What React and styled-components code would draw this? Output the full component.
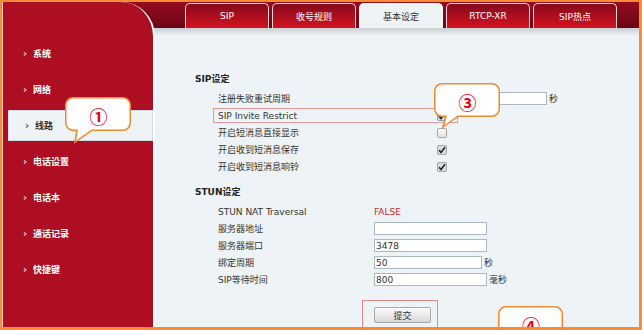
import React from "react";
import styled, { createGlobalStyle } from "styled-components";

const GlobalStyle = createGlobalStyle`
   body {
      margin: 0;
      font-family: "DejaVu Sans", "Noto Sans CJK SC", sans-serif;
   }
`;

const Frame = styled.div`
   position: relative;
   width: 642px;
   height: 330px;
   box-sizing: border-box;
   border: solid #f28c38;
   border-width: 2px 3px 3px 2px;
   overflow: hidden;
   display: flex;
   background: linear-gradient(#960b1f, #6c0514) 0 0 / 100% 26px no-repeat,
      linear-gradient(#c8ced2, #edf3f6) 0 26px / 100% 8px no-repeat, #edf3f6;
`;

const Sidebar = styled.div`
   width: 153px;
   flex-shrink: 0;
   box-sizing: border-box;
   background: #ad0e21;
   border-right: 2px solid #fff;
   border-left: 1px solid #f3c9c9;
   border-top-right-radius: 34px;
   padding: 36px 0 0 5px;
   display: flex;
   flex-direction: column;
   gap: 5px;
`;

const NavItem = styled.div`
   display: flex;
   align-items: center;
   height: 31px;
   box-sizing: border-box;
   padding-left: ${(p) => (p.$active ? 16 : 14)}px;
   font-size: 9px;
   font-weight: 700;
   color: ${(p) => (p.$active ? "#333" : "#fff")};
   background: ${(p) => (p.$active ? "#eef3f6" : "transparent")};
   border: 1px solid ${(p) => (p.$active ? "#d3dbe0" : "transparent")};
`;

const Arrow = styled.span`
   width: 10px;
   font-size: 10px;
   color: ${(p) => (p.$active ? "#555" : "#f4dcdc")};
`;

const Main = styled.div`
   flex: 1;
   display: flex;
   flex-direction: column;
`;

const TabBar = styled.div`
   height: 26px;
   padding: 1px 0 0 30px;
   box-sizing: border-box;
   display: flex;
   gap: 3px;
`;

const Tab = styled.div`
   width: 84px;
   height: 25px;
   box-sizing: border-box;
   border: 1px solid ${(p) => (p.$active ? "#f4f6f8" : "#f1d4d6")};
   border-bottom: none;
   border-radius: 5px 5px 0 0;
   background: ${(p) =>
      p.$active ? "#eef3f6" : "linear-gradient(#860a1c, #d3121f)"};
   color: ${(p) => (p.$active ? "#333" : "#fff")};
   font-size: 9px;
   display: flex;
   align-items: center;
   justify-content: center;
`;

const Shade = styled.div`
   height: 8px;
`;

const Content = styled.div`
   padding: 43px 0 0 40px;
   color: #333;
   font-size: 9px;
`;

const Section = styled.div`
   margin-top: ${(p) => p.$gap || 0}px;
`;

const Title = styled.div`
   height: 16px;
   line-height: 16px;
   font-weight: 700;
   color: #222;
   margin-bottom: 4px;
`;

const Rows = styled.div`
   display: flex;
   flex-direction: column;
   gap: 2px;
`;

const Row = styled.div`
   display: grid;
   grid-template-columns: ${(p) => p.$label}px auto;
   align-items: center;
   height: 15px;
   margin-left: 18px;
   padding-left: 5px;
   width: ${(p) => (p.$mark ? "245px" : "auto")};
   box-sizing: border-box;
   box-shadow: ${(p) => (p.$mark ? "inset 0 0 0 1px #e59a9a" : "none")};
`;

const Value = styled.div`
   display: flex;
   align-items: center;
`;

const Field = styled.input`
   width: ${(p) => p.$w}px;
   height: 13px;
   box-sizing: border-box;
   border: 1px solid #a9b8c4;
   background: #fff;
   padding: 0 1px;
   font: 9px "DejaVu Sans", sans-serif;
   color: #333;
   outline: none;
`;

const Unit = styled.span`
   margin-left: 2px;
`;

const Flag = styled.span`
   color: #d4232b;
`;

const Box = styled.span`
   width: 10px;
   height: 10px;
   box-sizing: border-box;
   border: 1px solid ${(p) => (p.$focus ? "#7f9cc8" : "#a6a6a6")};
   border-radius: 2px;
   background: ${(p) =>
      p.$focus ? "#c9d9f1" : p.$on ? "#dcdcdc" : "linear-gradient(#fafafa, #e4e4e4)"};
   display: flex;
   align-items: center;
   justify-content: center;
`;

const SubmitArea = styled.div`
   margin: 13px 0 0 167px;
   width: 76px;
   height: 30px;
   box-sizing: border-box;
   border: 1px solid #e08a8a;
   padding: 6px 0 0 11px;
`;

const Button = styled.button`
   width: 57px;
   height: 16px;
   padding: 0;
   border: 1px solid #a7a7a7;
   border-radius: 2px;
   background: linear-gradient(#fbfbfb, #d9d9d9);
   font: 9px "DejaVu Sans", "Noto Sans CJK SC", sans-serif;
   color: #333;
`;

const Bubble = styled.div`
   position: absolute;
   left: ${(p) => p.$x}px;
   top: ${(p) => p.$y}px;
   z-index: 5;
`;

const BubbleNum = styled.span`
   position: absolute;
   left: 0;
   top: 0;
   width: 100%;
   height: ${(p) => p.$h}px;
   padding-top: 3px;
   box-sizing: border-box;
   display: flex;
   align-items: center;
   justify-content: center;
   color: #e60012;
   font: 700 18px "Noto Sans CJK SC", sans-serif;
`;

function Callout({ x, y, w, h, tail, label }) {
   const [a, b, tx, ty] = tail;
   const r = 8;
   const s = 0.75;
   const q = r - s;
   const d = `M${r} ${s} H${w - r} A${q} ${q} 0 0 1 ${w - s} ${r} V${h - r} A${q} ${q} 0 0 1 ${w - r} ${h - s} H${b} L${tx} ${ty} L${a} ${h - s} H${r} A${q} ${q} 0 0 1 ${s} ${h - r} V${r} A${q} ${q} 0 0 1 ${r} ${s} Z`;
   return (
      <Bubble $x={x} $y={y}>
         <svg width={w + 1} height={ty + 2} style={{ display: "block" }}>
            <path d={d} fill="#fff" stroke="#ee8a30" strokeWidth="1.5" />
         </svg>
         <BubbleNum $h={h}>{label}</BubbleNum>
      </Bubble>
   );
}

const Check = ({ on, focus }) => (
   <Box $on={on} $focus={focus}>
      {on && (
         <svg width="8" height="8" viewBox="0 0 8 8">
            <path d="M1 4.2 L3 6.4 L7 1.2" fill="none" stroke="#222" strokeWidth="1.6" />
         </svg>
      )}
   </Box>
);

const nav = ["系统", "网络", "线路", "电话设置", "电话本", "通话记录", "快捷键"];
const tabs = ["SIP", "收号规则", "基本设定", "RTCP-XR", "SIP热点"];

const App = () => {
   return (
      <>
         <GlobalStyle />
         <Frame>
            <Sidebar>
               {nav.map((item) => (
                  <NavItem key={item} $active={item === "线路"}>
                     <Arrow $active={item === "线路"}>›</Arrow>
                     {item}
                  </NavItem>
               ))}
            </Sidebar>
            <Main>
               <TabBar>
                  {tabs.map((tab) => (
                     <Tab key={tab} $active={tab === "基本设定"}>
                        {tab}
                     </Tab>
                  ))}
               </TabBar>
               <Shade />
               <Content>
                  <Section>
                     <Title>SIP设定</Title>
                     <Rows>
                        <Row $label={219}>
                           <span>注册失败重试周期</span>
                           <Value>
                              <Field $w={110} defaultValue="" />
                              <Unit>秒</Unit>
                           </Value>
                        </Row>
                        <Row $label={219} $mark>
                           <span>SIP Invite Restrict</span>
                           <Value>
                              <Check on focus />
                           </Value>
                        </Row>
                        <Row $label={219}>
                           <span>开启短消息直接显示</span>
                           <Value>
                              <Check />
                           </Value>
                        </Row>
                        <Row $label={219}>
                           <span>开启收到短消息保存</span>
                           <Value>
                              <Check on />
                           </Value>
                        </Row>
                        <Row $label={219}>
                           <span>开启收到短消息响铃</span>
                           <Value>
                              <Check on />
                           </Value>
                        </Row>
                     </Rows>
                  </Section>
                  <Section $gap={10}>
                     <Title>STUN设定</Title>
                     <Rows>
                        <Row $label={156}>
                           <span>STUN NAT Traversal</span>
                           <Flag>FALSE</Flag>
                        </Row>
                        <Row $label={156}>
                           <span>服务器地址</span>
                           <Value>
                              <Field $w={113} defaultValue="" />
                           </Value>
                        </Row>
                        <Row $label={156}>
                           <span>服务器端口</span>
                           <Value>
                              <Field $w={113} defaultValue="3478" />
                           </Value>
                        </Row>
                        <Row $label={156}>
                           <span>绑定周期</span>
                           <Value>
                              <Field $w={108} defaultValue="50" />
                              <Unit>秒</Unit>
                           </Value>
                        </Row>
                        <Row $label={156}>
                           <span>SIP等待时间</span>
                           <Value>
                              <Field $w={113} defaultValue="800" />
                              <Unit>毫秒</Unit>
                           </Value>
                        </Row>
                     </Rows>
                  </Section>
                  <SubmitArea>
                     <Button>提交</Button>
                  </SubmitArea>
               </Content>
            </Main>
            <Callout x={63} y={95} w={66} h={34} tail={[12, 27, 10, 45]} label="①" />
            <Callout x={432} y={81} w={66} h={34} tail={[12, 24, 9, 44]} label="③" />
            <Callout x={496} y={304} w={65} h={34} tail={[20, 32, 18, 46]} label="④" />
         </Frame>
      </>
   );
};

export default App;
